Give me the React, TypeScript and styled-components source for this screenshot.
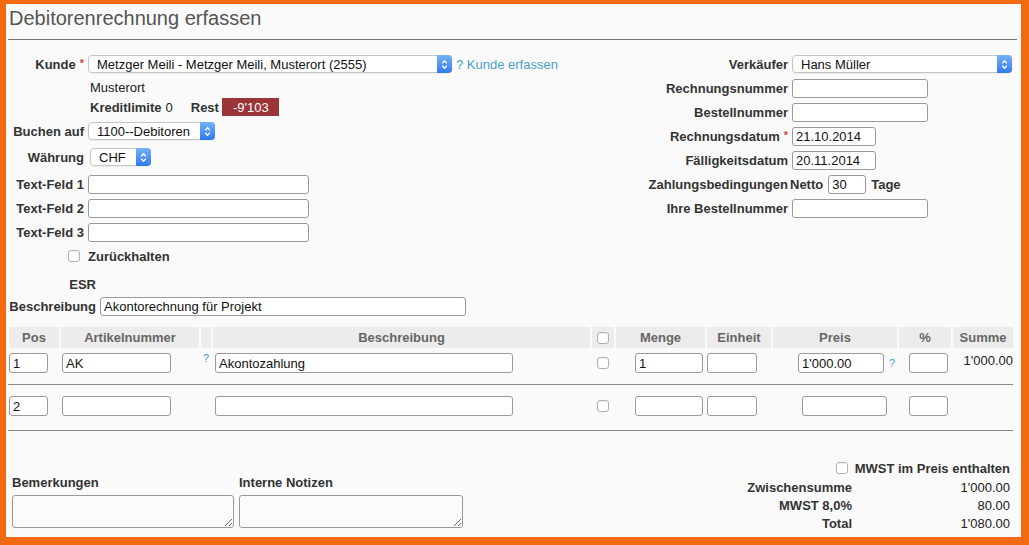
import React from 'react';
import styled, { createGlobalStyle } from 'styled-components';

const GlobalStyle = createGlobalStyle`
  html, body {
    margin: 0;
    padding: 0;
    background: #f46a10;
  }
  body {
    font-family: "Liberation Sans", Arial, Helvetica, sans-serif;
    font-size: 13px;
    line-height: 15px;
    color: #222;
  }
`;

const Frame = styled.div`
  box-sizing: border-box;
  width: 1029px;
  height: 545px;
  padding: 4px 8px 8px 6px;
  background: #f46a10;
`;

const Panel = styled.div`
  box-sizing: border-box;
  height: 100%;
  display: flex;
  flex-direction: column;
  background: #fafafa;
  padding: 0 4px 0 2px;
  overflow: hidden;
`;

const Title = styled.h1`
  margin: 0;
  padding: 2px 0 9px 1px;
  font-size: 20px;
  line-height: 24px;
  font-weight: normal;
  color: #555;
  border-bottom: 1px solid #777;
`;

const TopSection = styled.div`
  display: flex;
  margin-top: 12px;
`;

const LeftColumn = styled.div`
  width: 592px;
  display: flex;
  flex-direction: column;
`;

const RightColumn = styled.div`
  flex: 1;
  display: flex;
  flex-direction: column;
`;

const FormRow = styled.div<{ $h?: number; $mt?: number }>`
  display: flex;
  align-items: center;
  height: ${p => p.$h ?? 24}px;
  margin-top: ${p => p.$mt ?? 0}px;
  white-space: nowrap;
`;

const Label = styled.div<{ $w: number; $gap?: number }>`
  flex: none;
  width: ${p => p.$w}px;
  margin-right: ${p => p.$gap ?? 4}px;
  text-align: right;
  font-weight: bold;
  color: #333;
  white-space: nowrap;
`;

const CheckLabel = styled(Label)`
  display: flex;
  justify-content: flex-end;
  box-sizing: border-box;
  padding-right: 4px;
`;

const Required = styled.span`
  color: #d9473f;
  font-size: 11px;
  margin-left: 4px;
  vertical-align: 2px;
`;

const Bold = styled.span<{ $ml?: number }>`
  font-weight: bold;
  color: #333;
  margin-left: ${p => p.$ml ?? 0}px;
`;

const Plain = styled.span<{ $ml?: number }>`
  color: #222;
  margin-left: ${p => p.$ml ?? 0}px;
`;

const Info = styled.div`
  padding-left: 2px;
  display: flex;
  align-items: center;
`;

const Badge = styled.span`
  display: inline-flex;
  align-items: center;
  height: 18px;
  margin-left: 3px;
  padding: 0 10px 0 11px;
  background: #9c3538;
  color: #fff;
`;

const HelpLink = styled.span`
  color: #4aa0c4;
  margin-left: 4px;
`;

const HelpMark = styled.span<{ $ml?: number }>`
  color: #4aa0c8;
  font-size: 11px;
  line-height: 11px;
  margin-left: ${p => p.$ml ?? 0}px;
`;

const TextInput = styled.input<{ $w: number; $h?: number; $ml?: number }>`
  box-sizing: border-box;
  width: ${p => p.$w}px;
  height: ${p => p.$h ?? 19}px;
  margin: 0 0 0 ${p => p.$ml ?? 0}px;
  padding: 0 3px;
  border: 1px solid #9a9a9a;
  border-radius: 3px;
  background: #fff;
  font: 13px "Liberation Sans", Arial, sans-serif;
  color: #111;
  outline: none;
`;

const SelectBox = styled.div<{ $w: number; $ml?: number }>`
  box-sizing: border-box;
  display: inline-flex;
  align-items: center;
  justify-content: space-between;
  width: ${p => p.$w}px;
  height: 18px;
  margin-left: ${p => p.$ml ?? 0}px;
  padding-left: 8px;
  background: #fff;
  border: 1px solid #c6c6c6;
  border-radius: 4px;
  box-shadow: 0 1px 1px rgba(0, 0, 0, 0.06);
  color: #111;
  white-space: nowrap;
`;

const Stepper = styled.span`
  flex: none;
  display: flex;
  align-items: center;
  justify-content: center;
  width: 15px;
  height: 18px;
  margin: -1px -1px -1px 0;
  border-radius: 0 4px 4px 0;
  background: linear-gradient(#74b2fa, #2f79ee);
`;

const Checkbox = styled.input.attrs({ type: 'checkbox' })`
  appearance: none;
  -webkit-appearance: none;
  box-sizing: border-box;
  width: 12px;
  height: 12px;
  margin: 0;
  border: 1px solid #b0b0b0;
  border-radius: 3px;
  background: #fff;
  box-shadow: inset 0 1px 1px rgba(0, 0, 0, 0.06);
`;

const Select = ({ value, width, ml }: { value: string; width: number; ml?: number }) => (
  <SelectBox $w={width} $ml={ml}>
    <span>{value}</span>
    <Stepper>
      <svg width="7" height="11" viewBox="0 0 7 11">
        <path d="M1.2 4.2 3.5 1.8 5.8 4.2M1.2 6.8 3.5 9.2 5.8 6.8" fill="none" stroke="#fff" strokeWidth="1.3" />
      </svg>
    </Stepper>
  </SelectBox>
);

/* positions table */
const columns = 'grid-template-columns: 50px 138px 10px 377px 22px 89px 64px 124px 52px 60px; column-gap: 2px;';

const Table = styled.div`
  width: 1005px;
  margin-top: 10px;
`;

const TableHead = styled.div`
  display: grid;
  ${columns}
  padding-left: 1px;
`;

const HeadCell = styled.div`
  height: 21px;
  display: flex;
  align-items: center;
  justify-content: center;
  background: #ececec;
  font-weight: bold;
  color: #666;
`;

const ItemRow = styled.div<{ $pt: number; $pb: number }>`
  display: grid;
  ${columns}
  padding: ${p => p.$pt}px 0 ${p => p.$pb}px 1px;
  border-bottom: 1px solid #888;
`;

const Cell = styled.div<{ $justify?: string; $align?: string; $pl?: number; $pr?: number }>`
  display: flex;
  align-items: ${p => p.$align ?? 'center'};
  justify-content: ${p => p.$justify ?? 'flex-start'};
  padding-left: ${p => p.$pl ?? 0}px;
  padding-right: ${p => p.$pr ?? 0}px;
  white-space: nowrap;
`;

/* bottom */
const Bottom = styled.div`
  flex: 1;
  display: flex;
  justify-content: space-between;
  align-items: flex-end;
  padding: 0 7px 5px 4px;
`;

const Notes = styled.div`
  display: flex;
  gap: 5px;
  margin-bottom: 4px;
`;

const NoteGroup = styled.div`
  display: flex;
  flex-direction: column;
`;

const NoteLabel = styled.div`
  font-weight: bold;
  color: #333;
  margin-bottom: 5px;
`;

const NoteArea = styled.textarea<{ $w: number }>`
  box-sizing: border-box;
  display: block;
  width: ${p => p.$w}px;
  height: 33px;
  margin: 0;
  border: 1px solid #999;
  border-radius: 3px;
  background: #fbfbfb;
  font: 13px "Liberation Sans", Arial, sans-serif;
`;

const Totals = styled.div`
  display: flex;
  flex-direction: column;
  align-items: flex-end;
`;

const VatToggle = styled.div`
  display: flex;
  align-items: center;
  gap: 7px;
  height: 20px;
  font-weight: bold;
  color: #333;
`;

const SumGrid = styled.div`
  display: grid;
  grid-template-columns: auto 158px;
  grid-auto-rows: 18px;
  align-items: center;
`;

const SumLabel = styled.div`
  text-align: right;
  font-weight: bold;
  color: #333;
`;

const SumValue = styled.div`
  text-align: right;
  color: #222;
`;

export default function App() {
  return (
    <Frame>
      <GlobalStyle />
      <Panel>
        <Title>Debitorenrechnung erfassen</Title>

        <TopSection>
          <LeftColumn>
            <FormRow>
              <Label $w={76}>Kunde<Required>*</Required></Label>
              <Select value="Metzger Meili - Metzger Meili, Musterort (2555)" width={364} />
              <HelpLink>? Kunde erfassen</HelpLink>
            </FormRow>
            <FormRow $h={22}>
              <Label $w={76} />
              <Info><Plain>Musterort</Plain></Info>
            </FormRow>
            <FormRow $h={18}>
              <Label $w={76} />
              <Info>
                <Bold>Kreditlimite</Bold>
                <Plain $ml={4}>0</Plain>
                <Bold $ml={18}>Rest</Bold>
                <Badge>-9'103</Badge>
              </Info>
            </FormRow>
            <FormRow $mt={3}>
              <Label $w={76}>Buchen auf</Label>
              <Select value="1100--Debitoren" width={127} />
            </FormRow>
            <FormRow $mt={2}>
              <Label $w={76}>Währung</Label>
              <Select value="CHF" width={61} ml={2} />
            </FormRow>
            <FormRow $mt={3}>
              <Label $w={76}>Text-Feld 1</Label>
              <TextInput $w={221} />
            </FormRow>
            <FormRow>
              <Label $w={76}>Text-Feld 2</Label>
              <TextInput $w={221} />
            </FormRow>
            <FormRow>
              <Label $w={76}>Text-Feld 3</Label>
              <TextInput $w={221} />
            </FormRow>
            <FormRow>
              <CheckLabel $w={76}><Checkbox /></CheckLabel>
              <Bold>Zurückhalten</Bold>
            </FormRow>
            <FormRow $h={21} $mt={6}>
              <Label $w={88}>ESR</Label>
            </FormRow>
            <FormRow $h={22}>
              <Label $w={88}>Beschreibung</Label>
              <TextInput $w={366} defaultValue="Akontorechnung für Projekt" />
            </FormRow>
          </LeftColumn>

          <RightColumn>
            <FormRow>
              <Label $w={188}>Verkäufer</Label>
              <Select value="Hans Müller" width={220} />
            </FormRow>
            <FormRow>
              <Label $w={188}>Rechnungsnummer</Label>
              <TextInput $w={136} />
            </FormRow>
            <FormRow>
              <Label $w={188}>Bestellnummer</Label>
              <TextInput $w={136} />
            </FormRow>
            <FormRow>
              <Label $w={188}>Rechnungsdatum<Required>*</Required></Label>
              <TextInput $w={84} defaultValue="21.10.2014" />
            </FormRow>
            <FormRow>
              <Label $w={188}>Fälligkeitsdatum</Label>
              <TextInput $w={84} defaultValue="20.11.2014" />
            </FormRow>
            <FormRow>
              <Label $w={188} $gap={2}>Zahlungsbedingungen</Label>
              <Bold>Netto</Bold>
              <TextInput $w={38} $ml={5} defaultValue="30" />
              <Bold $ml={5}>Tage</Bold>
            </FormRow>
            <FormRow>
              <Label $w={188}>Ihre Bestellnummer</Label>
              <TextInput $w={136} />
            </FormRow>
          </RightColumn>
        </TopSection>

        <Table>
          <TableHead>
            <HeadCell>Pos</HeadCell>
            <HeadCell>Artikelnummer</HeadCell>
            <HeadCell />
            <HeadCell>Beschreibung</HeadCell>
            <HeadCell><Checkbox /></HeadCell>
            <HeadCell>Menge</HeadCell>
            <HeadCell>Einheit</HeadCell>
            <HeadCell>Preis</HeadCell>
            <HeadCell>%</HeadCell>
            <HeadCell>Summe</HeadCell>
          </TableHead>

          <ItemRow $pt={5} $pb={11}>
            <Cell><TextInput $w={39} $h={20} defaultValue="1" /></Cell>
            <Cell $pl={1}><TextInput $w={109} $h={20} defaultValue="AK" /></Cell>
            <Cell $align="flex-start" $pl={2}><HelpMark>?</HelpMark></Cell>
            <Cell $pl={2}><TextInput $w={298} $h={20} defaultValue="Akontozahlung" /></Cell>
            <Cell $justify="center"><Checkbox /></Cell>
            <Cell $justify="flex-end" $pr={2}><TextInput $w={68} $h={20} defaultValue="1" /></Cell>
            <Cell><TextInput $w={50} $h={20} /></Cell>
            <Cell $pl={25}>
              <TextInput $w={86} $h={20} defaultValue="1'000.00" />
              <HelpMark $ml={5}>?</HelpMark>
            </Cell>
            <Cell $pl={10}><TextInput $w={39} $h={20} /></Cell>
            <Cell $justify="flex-end" $align="flex-start">1'000.00</Cell>
          </ItemRow>

          <ItemRow $pt={11} $pb={14}>
            <Cell><TextInput $w={39} $h={20} defaultValue="2" /></Cell>
            <Cell $pl={1}><TextInput $w={109} $h={20} /></Cell>
            <Cell />
            <Cell $pl={2}><TextInput $w={298} $h={20} /></Cell>
            <Cell $justify="center"><Checkbox /></Cell>
            <Cell $justify="flex-end" $pr={2}><TextInput $w={68} $h={20} /></Cell>
            <Cell><TextInput $w={50} $h={20} /></Cell>
            <Cell $pl={29}><TextInput $w={85} $h={20} /></Cell>
            <Cell $pl={10}><TextInput $w={39} $h={20} /></Cell>
            <Cell />
          </ItemRow>
        </Table>

        <Bottom>
          <Notes>
            <NoteGroup>
              <NoteLabel>Bemerkungen</NoteLabel>
              <NoteArea $w={222} />
            </NoteGroup>
            <NoteGroup>
              <NoteLabel>Interne Notizen</NoteLabel>
              <NoteArea $w={224} />
            </NoteGroup>
          </Notes>

          <Totals>
            <VatToggle>
              <Checkbox />
              MWST im Preis enthalten
            </VatToggle>
            <SumGrid>
              <SumLabel>Zwischensumme</SumLabel>
              <SumValue>1'000.00</SumValue>
              <SumLabel>MWST 8,0%</SumLabel>
              <SumValue>80.00</SumValue>
              <SumLabel>Total</SumLabel>
              <SumValue>1'080.00</SumValue>
            </SumGrid>
          </Totals>
        </Bottom>
      </Panel>
    </Frame>
  );
}
